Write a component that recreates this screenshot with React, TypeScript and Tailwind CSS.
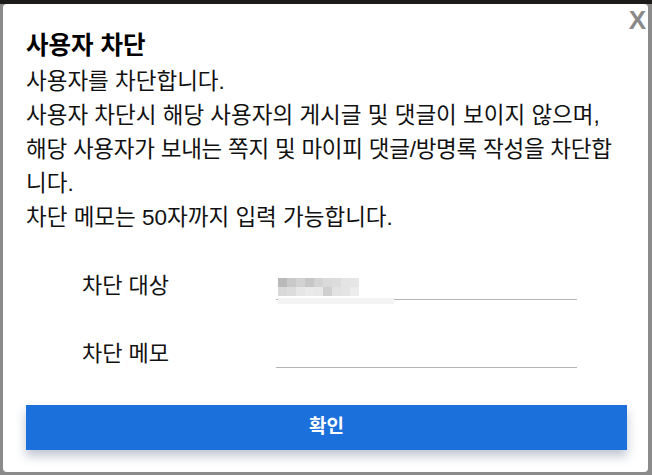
import React, { useState } from 'react'

const FONT = "font-['Liberation_Sans','Noto_Sans_CJK_KR',sans-serif] [font-feature-settings:'palt']"

// pixelated placeholder for the masked nickname
const maskedCells = [
  ['#b9b9b9', '#c9c9c9', '#d2d2d2', '#c6c6c6', '#d3d3d3', '#dadada', '#dcdcdc', '#e4e4e4', '#e6e6e6'],
  ['#d9d9d9', '#dcdcdc', '#e6e6e6', '#eaeaea', '#e8e8e8', '#cfcfcf', '#e2e2e2', '#e4e4e4', '#ececec']
]

const BlockUserModal: React.FC = () => {
  const [memo, setMemo] = useState('')

  return (
    <div className="relative w-[645px] h-[468px] bg-white rounded-[4px] pt-[26px] px-[23px]">
      <button className="absolute top-[3px] right-[2px] text-[26px] leading-none font-bold text-[#8a8a8a] font-['Liberation_Sans',sans-serif]">
        X
      </button>

      <h2 className="text-[24.5px] leading-[32px] font-bold text-black">사용자 차단</h2>

      <div className="mt-[3px] text-[22.5px] leading-[34px] text-[#111] whitespace-nowrap">
        <p>사용자를 차단합니다.</p>
        <p>사용자 차단시 해당 사용자의 게시글 및 댓글이 보이지 않으며,</p>
        <p className="tracking-[-0.25px]">해당 사용자가 보내는 쪽지 및 마이피 댓글/방명록 작성을 차단합</p>
        <p>니다.</p>
        <p>차단 메모는 50자까지 입력 가능합니다.</p>
      </div>

      {/* form */}
      <div className="mt-[37px] pl-[56px] flex flex-col gap-[40px]">
        <div className="flex items-center">
          <label className="w-[194px] text-[22px] leading-[28px] text-[#111]">차단 대상</label>
          <div className="relative w-[301px] h-[28px] border-b border-[#b5b5b5]">
            <div className="absolute left-[2px] top-[6px] blur-[0.6px]">
              {maskedCells.map((row, r) => (
                <div key={r} className="flex">
                  {row.map((c, i) => (
                    <div key={i} className="w-[9px] h-[9px]" style={{ backgroundColor: c }} />
                  ))}
                </div>
              ))}
            </div>
            <div className="absolute left-[2px] top-[26px] w-[116px] h-[6px] bg-[#f3f3f3]" />
          </div>
        </div>
        <div className="flex items-center">
          <label className="w-[194px] text-[22px] leading-[28px] text-[#111]">차단 메모</label>
          <input
            value={memo}
            maxLength={50}
            onChange={e => setMemo(e.target.value)}
            className="w-[301px] h-[28px] border-b border-[#b5b5b5] outline-none text-[16px]"
          />
        </div>
      </div>

      <button className="mt-[37px] w-[601px] h-[45px] bg-[#1b70db] text-white text-[19px] font-bold shadow-[0_6px_10px_rgba(40,60,100,0.3)]">
        확인
      </button>
    </div>
  )
}

export default function App() {
  return (
    <div
      className={`${FONT} w-[652px] h-[475px] overflow-hidden pt-[4px] pl-[3px] bg-[linear-gradient(to_bottom,#1d1b19_0,#1d1b19_4px,#8b8b8b_4px)]`}
    >
      <BlockUserModal />
    </div>
  )
}
